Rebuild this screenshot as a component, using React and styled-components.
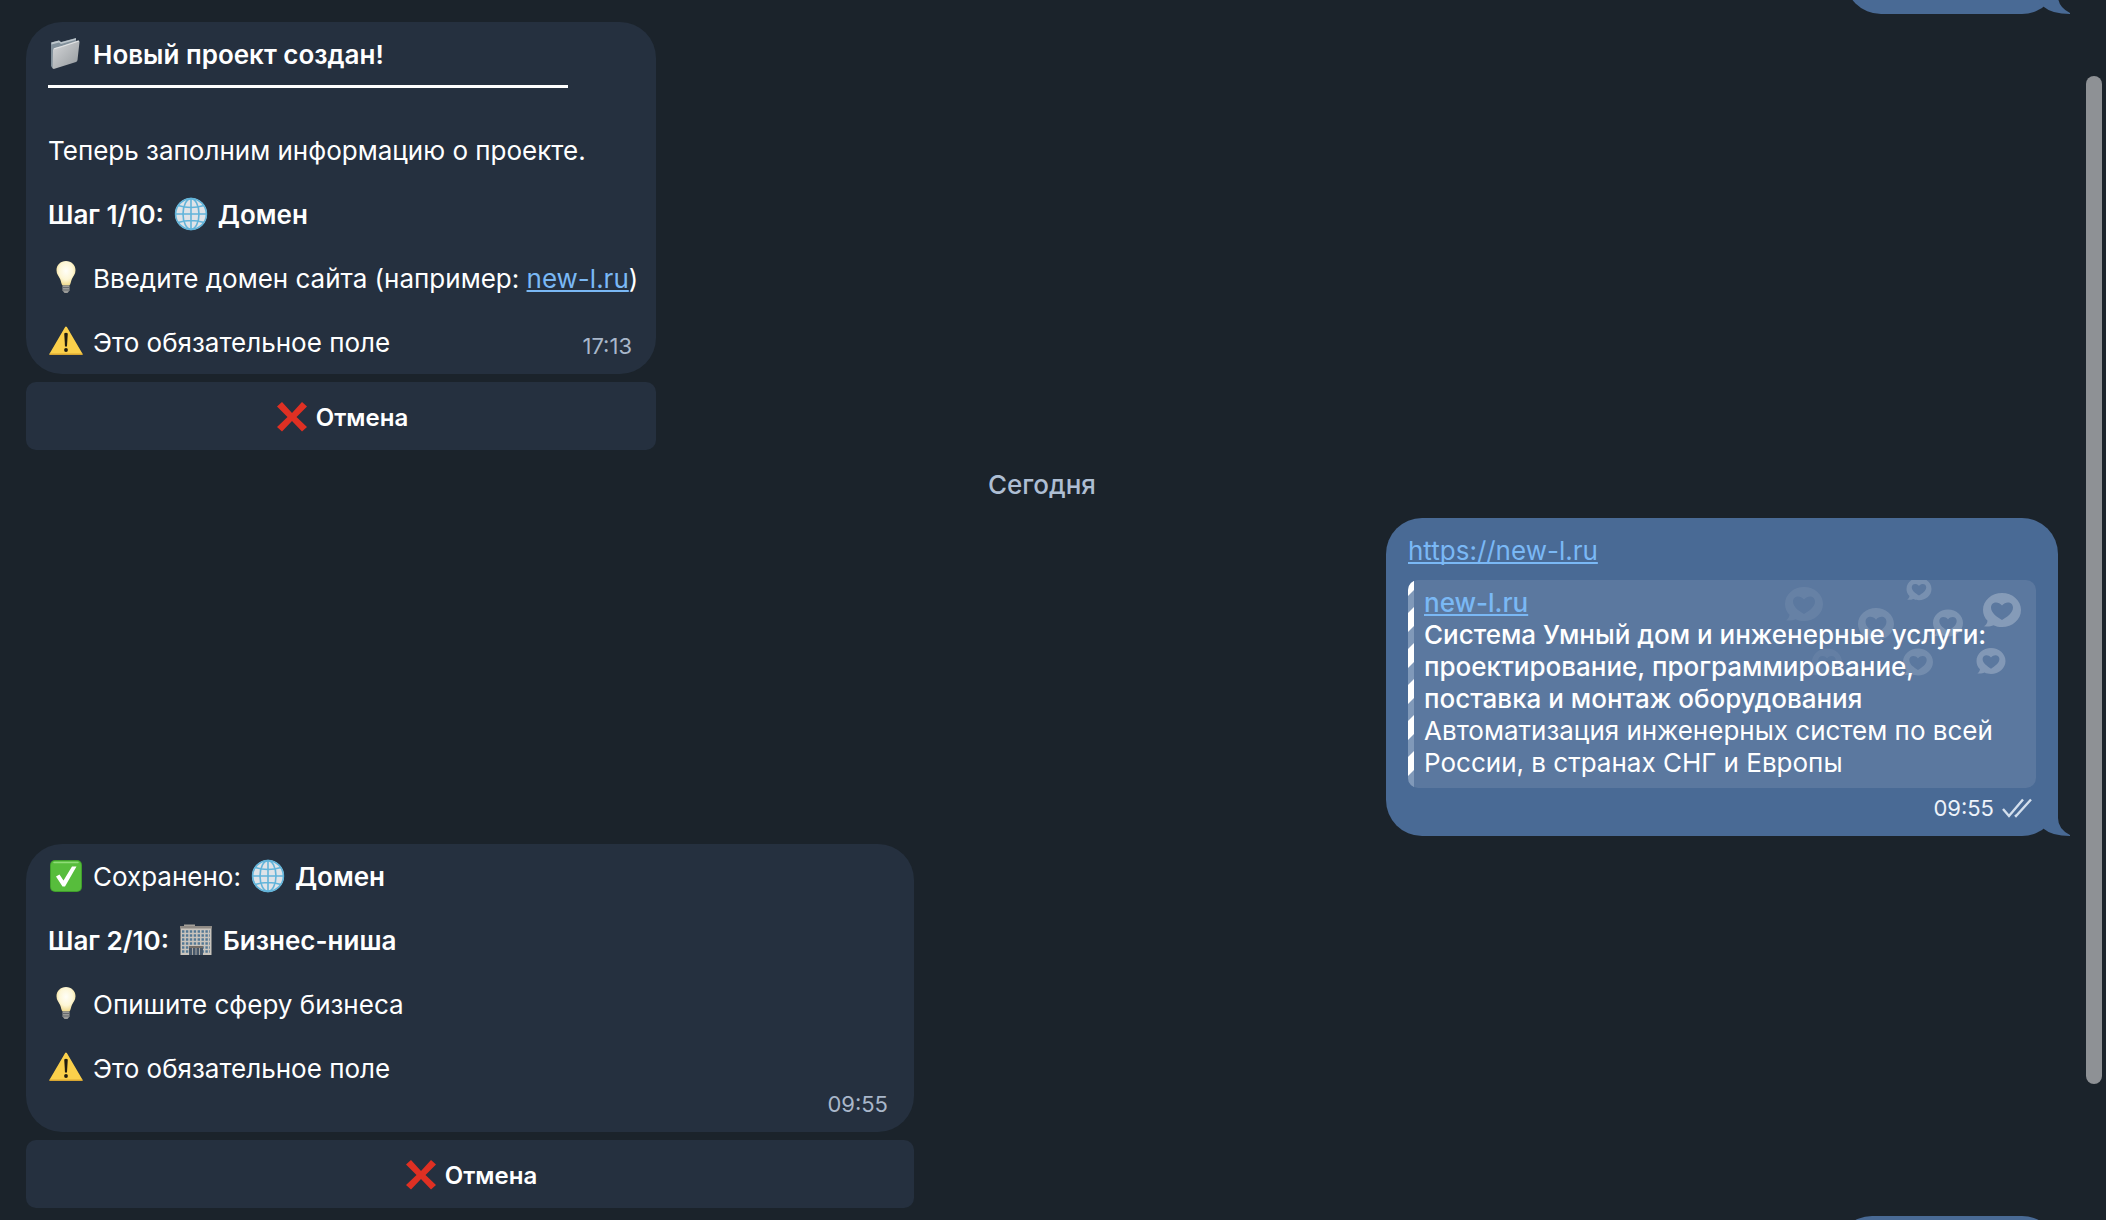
import React from 'react'
import { styled, createGlobalStyle } from 'styled-components';

const GlobalStyle = createGlobalStyle`
  * { box-sizing: border-box; }
  body {
    margin: 0;
    background: #1b232b;
    font-family: Inter, "Liberation Sans", sans-serif;
    font-size: 26px;
    line-height: 32px;
    color: #fff;
  }
`
const Chat = styled.main`
  position: relative;
  height: 100vh;
  overflow: hidden;
  padding: 0 48px 0 26px;
`
const Feed = styled.div`
  display: flex;
  flex-direction: column;
  gap: 8px;
  margin-top: -58px;
`
const Message = styled.article`
  display: flex;
  flex-direction: column;
  gap: 8px;
  width: ${(p) => p.$width}px;
  max-width: 100%;
  align-self: ${(p) => (p.$out ? 'flex-end' : 'flex-start')};
`
const Bubble = styled.div`
  position: relative;
  min-height: 72px;
  padding: 17px 22px 15px;
  border-radius: 36px;
  background: ${(p) => (p.$out ? '#496a95' : '#25303f')};
`
const TailShape = styled.svg`
  position: absolute;
  right: -12px;
  bottom: 0;
  width: 32px;
  height: 36px;
  fill: #496a95;
`
const Line = styled.p`
  display: flex;
  align-items: center;
  gap: 9px;
  margin: 0 0 32px;
  font-weight: ${(p) => (p.$bold ? 600 : 400)};
  white-space: nowrap;
  b { font-weight: 600; }
`
const Heading = styled(Line)`
  margin: 0;
`
const Rule = styled.hr`
  width: 520px;
  max-width: 100%;
  height: 3px;
  margin: 14px 0 47px;
  border: 0;
  background: #fff;
`
const LastRow = styled.div`
  display: flex;
  align-items: flex-end;
  justify-content: space-between;
  margin-right: 2px;
  p { margin: 0; }
`
const Time = styled.time`
  display: flex;
  align-items: center;
  justify-content: flex-end;
  gap: 8px;
  margin: ${(p) => (p.$below ? '6px 4px 0 0' : '0')};
  font-size: 22px;
  line-height: 26px;
  color: ${(p) => (p.$out ? '#edf3fa' : '#a9b7ca')};
`
const Link = styled.a`
  color: #7ab8f5;
  text-decoration: underline;
  text-decoration-thickness: 2px;
  text-decoration-skip-ink: none;
  text-underline-offset: 2px;
`
const Emoji = styled.svg`
  flex: none;
  width: 36px;
  height: 36px;
  margin: -2px 0;
`
const ReplyButton = styled.button`
  display: flex;
  align-items: center;
  justify-content: center;
  gap: 6px;
  height: 68px;
  padding: 3px 6px 0;
  border: 0;
  border-radius: 10px;
  background: #25303f;
  color: #fff;
  font: 600 24px/32px Inter, "Liberation Sans", sans-serif;
`
const DateLabel = styled.div`
  padding: 11px 0 9px;
  text-align: center;
  font-weight: 500;
  color: #aebed3;
`
const Preview = styled.section`
  position: relative;
  display: flex;
  gap: 10px;
  margin: 13px 0 7px;
  border-radius: 10px;
  overflow: hidden;
  background: #5b789f;
`
const Stripe = styled.div`
  flex: none;
  width: 6px;
  background: #8099b9;
  svg { display: block; width: 6px; height: 208px; }
`
const PreviewText = styled.div`
  position: relative;
  padding: 7px 0 9px;
`
const PreviewPart = styled.div`
  max-width: 590px;
  font-weight: ${(p) => (p.$bold ? 500 : 400)};
`
const Hearts = styled.svg`
  position: absolute;
  top: 0;
  right: 0;
  width: 270px;
  height: 110px;
`
const ScrollThumb = styled.div`
  position: absolute;
  top: 76px;
  right: 4px;
  bottom: 136px;
  width: 16px;
  border-radius: 8px;
  background: #8e9195;
`

const Globe = () => (
  <Emoji viewBox="0 0 36 36" aria-hidden="true">
    <circle cx="18" cy="17" r="16" fill="#dfe3e8" />
    <g fill="none" stroke="#62b4da" strokeWidth="1.6">
      <circle cx="18" cy="17" r="15.4" />
      <ellipse cx="18" cy="17" rx="8" ry="15.4" />
      <path d="M18 1.5v31M2.5 17h31M5 8.5q13 4 26 0M5 25.500q13-4 26 0" />
    </g>
  </Emoji>
)

const Bulb = () => (
  <Emoji viewBox="0 0 36 36" aria-hidden="true">
    <defs>
      <radialGradient id="bulb" cx=".5" cy=".4" r=".6">
        <stop offset="0" stopColor="#fffef8" />
        <stop offset=".6" stopColor="#fdf6d5" />
        <stop offset="1" stopColor="#efd98c" />
      </radialGradient>
    </defs>
    <path d="M18 0c-5.500 0-9.500 4-9.500 9.200 0 4 2.300 6 3.600 8.800 1 2.300 1.200 5.500 2.600 6.500h6.600c1.400-1 1.600-4.200 2.600-6.500 1.300-2.800 3.600-4.800 3.600-8.800C27.500 4 23.500 0 18 0z" fill="url(#bulb)" />
    <path d="M14.500 24.500h7v5l-2 2.500h-3l-2-2.500z" fill="#9b9b98" />
    <path d="M14.500 26.500h7M14.500 29h7" stroke="#65686c" />
  </Emoji>
)

const Warning = () => (
  <Emoji viewBox="0 0 36 36" aria-hidden="true">
    <path d="M18 2.500L33.500 29H2.500z" fill="#fbd04b" stroke="#fbd04b" strokeWidth="2" strokeLinejoin="round" />
    <path d="M2 29.300h32" stroke="#d9a632" strokeWidth="1.400" strokeLinecap="round" />
    <path d="M16.200 8.500q1.800-1.500 3.600 0l-.8 13h-2z" fill="#201c10" />
    <circle cx="18" cy="25" r="1.900" fill="#201c10" />
  </Emoji>
)

const Folder = () => (
  <Emoji viewBox="0 0 36 36" aria-hidden="true">
    <defs>
      <linearGradient id="folder" x1="0" y1="0" x2="1" y2="1">
        <stop offset="0" stopColor="#d6d8da" />
        <stop offset="1" stopColor="#94999d" />
      </linearGradient>
    </defs>
    <path d="M3 5.500l8-2 2 1.500 15-4v5L6 30l-1.500 1.500L3 29z" fill="#81909b" />
    <path d="M3.500 5.500l7.500-2 2 1.700L28 1.200v1.500L13 7l-2-1.500-7.500 2z" fill="#bdc6cc" />
    <path d="M6.500 11l7-2 16-5.500q2-.5 2 1.500L29.500 23q-.2 1.500-1.500 2L6.500 31.800q-2 .5-1.900-1.500L5 13z" fill="url(#folder)" />
    <path d="M5.500 12l9-2.600L31 4" fill="none" stroke="#e7e9ea" strokeWidth=".9" />
  </Emoji>
)

const Saved = () => (
  <Emoji viewBox="0 0 36 36" aria-hidden="true">
    <rect x="2" y="1" width="32" height="32" rx="5" fill="#3f9f2b" />
    <rect x="3" y="2" width="30" height="30" rx="4" fill="#57bd3c" />
    <path d="M6 3.500h24" stroke="#8fdc77" strokeWidth="1.500" strokeLinecap="round" />
    <path d="M8 17.500l3.500-2 4 6L24 7.500h4.500L17 27.500h-2.500z" fill="#fff" />
  </Emoji>
)

const Office = () => (
  <Emoji viewBox="0 0 36 36" aria-hidden="true">
    <path d="M6 1.500h11V4H6z" fill="#a5a09a" />
    <path d="M2.500 4h31v28h-31z" fill="#c9c4bd" />
    <path d="M2 3h32v2.500H2z" fill="#8f8a85" />
    <g stroke="#547894" strokeWidth="2.600" strokeDasharray="2.400 1.500">
      <path d="M4 8.500h28M4 12.500h28M4 16.500h28M4 20.500h28M4 24.500h28M4 28.500h28" />
    </g>
    <path d="M11 23h14v9H11z" fill="#46576a" />
    <path d="M11 23h14v2H11z" fill="#716b66" />
    <path d="M14.500 25v7M18 25v7M21.500 25v7" stroke="#a9a7a2" />
  </Emoji>
)

const Cross = () => (
  <Emoji viewBox="0 0 36 36" aria-hidden="true">
    <path d="M8 2l10 11L28 2l5 4.500L22.500 17 33 27l-5 4.500L18 21 8 31.500 3 27l10.500-10L3 6.500z" fill="#df3023" />
  </Emoji>
)

const Tail = () => (
  <TailShape viewBox="0 0 32 36" aria-hidden="true">
    <path d="M6 29Q14 36 32 36V35Q20 29 20 18V0H0V20z" />
  </TailShape>
)

const HEARTS = [
  { x: 38, y: 24, s: 38, o: 0.07 },
  { x: 110, y: 44, s: 36, o: 0.14 },
  { x: 153, y: 9, s: 25, o: 0.18 },
  { x: 182, y: 43, s: 30, o: 0.2 },
  { x: 236, y: 30, s: 38, o: 0.26 },
  { x: 61, y: 82, s: 30, o: 0.06 },
  { x: 152, y: 82, s: 30, o: 0.15 },
  { x: 225, y: 81, s: 29, o: 0.24 },
]

const HeartPattern = () => (
  <Hearts viewBox="0 0 270 110" aria-hidden="true">
    {HEARTS.map(({ x, y, s, o }) => (
      <g key={`${x}-${y}`} transform={`translate(${x} ${y}) scale(${s / 38})`} fill="#fff" opacity={o}>
        <path fillRule="evenodd" d="M0-17C10.500-17 19-9.500 19 0S10.500 17 0 17c-3 0-6-.5-8.500-1.800-2.500 1.300-6.500 1.500-9.500 1 2-1.300 3.300-3 3.500-5.500C-17.500 8-19 4-19 0-19-9.500-10.500-17 0-17zM0 10C5 7 11 3 11-2.500 11-8 4-9.500 0-4.500-4-9.500-11-8-11-2.500-11 3-5 7 0 10z" />
      </g>
    ))}
  </Hearts>
)

const Checks = () => (
  <svg width="30" height="20" viewBox="0 0 30 20" fill="none" stroke="#d3dfed" strokeWidth="2.4" aria-hidden="true">
    <path d="M1 11l6 7L21 1.500M13 17l1 1L29 1.500" />
  </svg>
)

const App = () => {
  return (
    <Chat>
      <GlobalStyle />
      <Feed>
        <Message $out $width={213}>
          <Bubble $out><Tail /></Bubble>
        </Message>

        <Message $width={630}>
          <Bubble>
            <Heading $bold><Folder />Новый проект создан!</Heading>
            <Rule />
            <Line>Теперь заполним информацию о проекте.</Line>
            <Line $bold>Шаг 1/10: <Globe /> Домен</Line>
            <Line>
              <Bulb />
              <span>Введите домен сайта (например: <Link href="#domain">new-l.ru</Link>)</span>
            </Line>
            <LastRow>
              <Line><Warning />Это обязательное поле</Line>
              <Time>17:13</Time>
            </LastRow>
          </Bubble>
          <ReplyButton type="button"><Cross />Отмена</ReplyButton>
        </Message>

        <DateLabel>Сегодня</DateLabel>

        <Message $out $width={672}>
          <Bubble $out>
            <Link href="#site">https://new-l.ru</Link>
            <Preview>
              <Stripe>
                <svg viewBox="0 0 6 208" fill="#fff" aria-hidden="true">
                  {[-9, 27, 63, 99, 135, 171].map((y) => (
                    <path key={y} d={`M0 ${y + 6}l6-6v19l-6 6z`} />
                  ))}
                </svg>
              </Stripe>
              <HeartPattern />
              <PreviewText>
                <PreviewPart $bold><Link href="#preview">new-l.ru</Link></PreviewPart>
                <PreviewPart $bold>
                  Система Умный дом и инженерные услуги: проектирование, программирование, поставка и монтаж оборудования
                </PreviewPart>
                <PreviewPart>Автоматизация инженерных систем по всей России, в странах СНГ и Европы</PreviewPart>
              </PreviewText>
            </Preview>
            <Time $out $below>09:55 <Checks /></Time>
            <Tail />
          </Bubble>
        </Message>

        <Message $width={888}>
          <Bubble>
            <Line><Saved />Сохранено: <Globe /><b>Домен</b></Line>
            <Line $bold>Шаг 2/10: <Office /> Бизнес-ниша</Line>
            <Line><Bulb />Опишите сферу бизнеса</Line>
            <Heading><Warning />Это обязательное поле</Heading>
            <Time $below>09:55</Time>
          </Bubble>
          <ReplyButton type="button"><Cross />Отмена</ReplyButton>
        </Message>

        <Message $out $width={222}>
          <Bubble $out><Tail /></Bubble>
        </Message>
      </Feed>
      <ScrollThumb />
    </Chat>
  )
}

export default App
